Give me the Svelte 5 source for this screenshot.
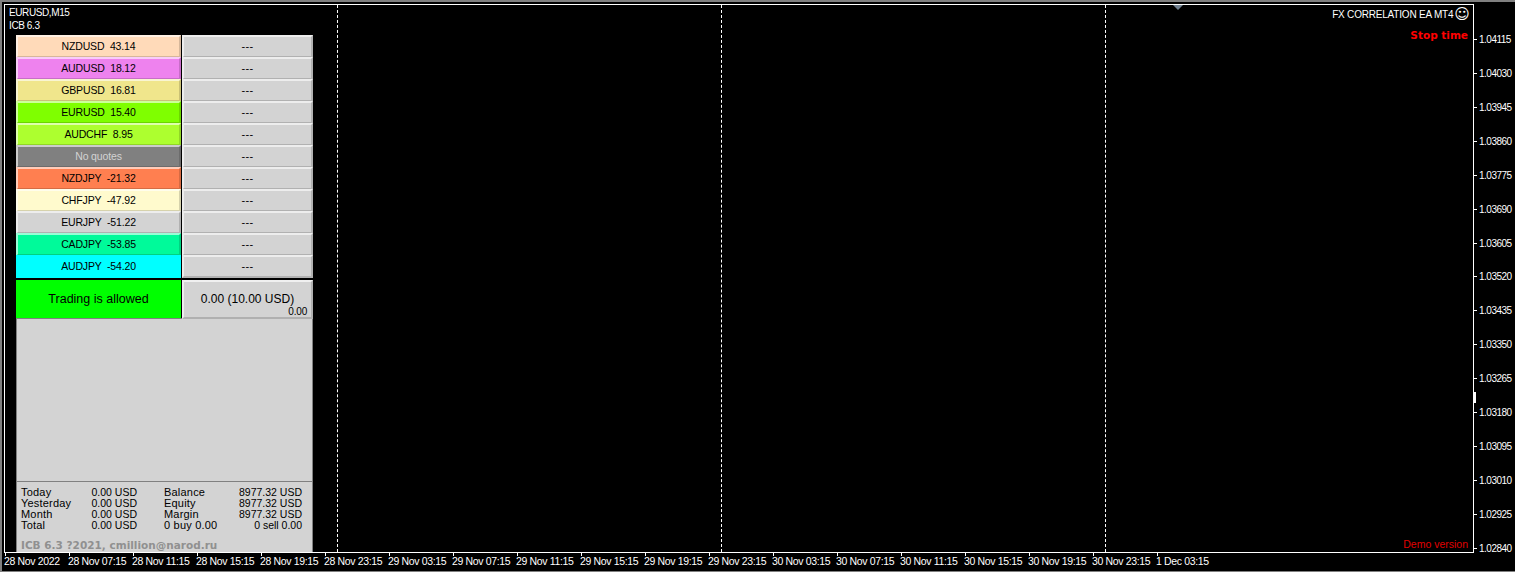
<script>
  const rows = [
    ['NZDUSD  43.14', '#ffdab9'], ['AUDUSD  18.12', '#ee82ee'], ['GBPUSD  16.81', '#f0e68c'],
    ['EURUSD  15.40', '#7fff00'], ['AUDCHF  8.95', '#adff2f'], ['No quotes', '#808080'],
    ['NZDJPY  -21.32', '#ff7f50'], ['CHFJPY  -47.92', '#fffacd'], ['EURJPY  -51.22', '#d3d3d3'],
    ['CADJPY  -53.85', '#00fa9a'], ['AUDJPY  -54.20', '#00ffff']
  ];
  const prices = Array.from({ length: 16 }, (_, i) => (1.04115 - i * 0.00085).toFixed(5));
  const times = ['28 Nov 2022','28 Nov 07:15','28 Nov 11:15','28 Nov 15:15','28 Nov 19:15','28 Nov 23:15',
    '29 Nov 03:15','29 Nov 07:15','29 Nov 11:15','29 Nov 15:15','29 Nov 19:15','29 Nov 23:15',
    '30 Nov 03:15','30 Nov 07:15','30 Nov 11:15','30 Nov 15:15','30 Nov 19:15','30 Nov 23:15','1 Dec 03:15'];
  const stats = [
    ['Today','0.00 USD','Balance','8977.32 USD'],
    ['Yesterday','0.00 USD','Equity','8977.32 USD'],
    ['Month','0.00 USD','Margin','8977.32 USD'],
    ['Total','0.00 USD','0 buy 0.00','0 sell 0.00']
  ];
</script>

<div class="window">
  <main class="chart">
    <i class="grid g1"></i><i class="grid g2"></i><i class="grid g3"></i>
    <i class="shift"></i>
    <i class="scale"></i>
    <div class="legend"><div>EURUSD,M15</div><div>ICB 6.3</div></div>
    <div class="brand">FX CORRELATION EA MT4<span class="smile">☺</span></div>
    <div class="stop">Stop time</div>
    <div class="demo">Demo version</div>

    <section class="panel">
      {#each rows as r}
        <div class="row">
          <div class="btn" class:muted={r[0] === 'No quotes'} class:flat={r[1] === '#00ffff'} style="--c:{r[1]}">{r[0]}</div>
          <div class="btn dash" style="--c:#d3d3d3">---</div>
        </div>
      {/each}
      <div class="status">
        <div class="allowed">Trading is allowed</div>
        <div class="profit">0.00 (10.00 USD)<small>0.00</small></div>
      </div>
      <div class="box">
        <div class="empty"></div>
        <div class="stats">
          {#each stats as s}
            <div class="line"><span class="lbl">{s[0]}</span><span class="v">{s[1]}</span><span class="lbl l2">{s[2]}</span><span class="v">{s[3]}</span></div>
          {/each}
        </div>
        <div class="copy">ICB 6.3 ?2021, cmillion@narod.ru</div>
      </div>
    </section>
  </main>
  <aside class="prices">
    {#each prices as p}<div class="price">{p}</div>{/each}
  </aside>
  <footer class="times">
    {#each times as t}<div class="time">{t}</div>{/each}
  </footer>
</div>

<style>
  :global(body) { margin: 0; background: #000; }
  .window {
    width: 1515px; height: 572px; box-sizing: border-box; background: #000; overflow: hidden;
    border-top: 2px solid #808080; border-left: 2px solid #808080; border-bottom: 1px solid #808080;
    padding: 2px 0 0 2px;
    display: grid; grid-template-columns: 1470px 41px; grid-template-rows: 549px 18px;
    font: 10px/11px "Liberation Sans", Arial, sans-serif; color: #fff;
  }
  .chart { position: relative; border: 1px solid #fff; background: #000; }
  .grid { position: absolute; top: 0; bottom: 0; width: 0; border-left: 1px dashed #fff; }
  .g1 { left: 332px; } .g2 { left: 716px; } .g3 { left: 1100px; }
  .shift {
    position: absolute; top: 0; left: 1168px; width: 0; height: 0;
    border: 5px solid transparent; border-top: 5px solid #708090; border-bottom: 0;
  }
  .scale { position: absolute; right: -3px; top: 387px; width: 3px; height: 11px; background: #fff; }
  .legend { position: absolute; left: 4px; top: 1px; line-height: 13px; font-size: 10px; letter-spacing: -0.4px; }
  .brand { position: absolute; right: 3px; top: 3px; display: flex; align-items: center; height: 13px; white-space: nowrap; letter-spacing: -0.2px; }
  .smile { font: 15px/13px "DejaVu Sans", sans-serif; margin-left: 1px; letter-spacing: 0; }
  .stop { position: absolute; right: 5px; top: 24px; color: #f00; font: bold 10.5px/13px "DejaVu Sans", sans-serif; }
  .demo { position: absolute; right: 5px; bottom: 1px; color: #e00000; font-size: 10.5px; line-height: 13px; }

  .panel { position: absolute; left: 11px; top: 30px; width: 297px; bottom: 0; display: flex; flex-direction: column; color: #000; font-size: 10.5px; }
  .row { flex: none; display: grid; grid-template-columns: 165px 132px; height: 22px; }
  .btn {
    box-sizing: border-box; background: var(--c); text-align: center; white-space: pre; line-height: 19px; letter-spacing: -0.15px;
    border: 2px solid;
    border-top-color: color-mix(in srgb, var(--c) 40%, white);
    border-left-color: color-mix(in srgb, var(--c) 40%, white);
    border-right-color: color-mix(in srgb, var(--c) 84%, black);
    border-bottom-color: color-mix(in srgb, var(--c) 84%, black);
  }
  .flat { border-color: var(--c); }
  .dash { margin-left: 1px; letter-spacing: 0.4px; font-size: 11px; }
  .muted { color: #d3d3d3; }
  .status { flex: none; margin-top: 3px; display: grid; grid-template-columns: 165px 132px; height: 38px; font-size: 12px; text-align: center; }
  .allowed { background: #0f0; line-height: 39px; font-size: 12.5px; }
  .profit {
    position: relative; margin-left: 1px; background: #d3d3d3; box-sizing: border-box;
    border: 2px solid; border-color: #f0f0f0 #b0b0b0 #b0b0b0 #f0f0f0;
    line-height: 35px;
  }
  .profit small { position: absolute; right: 4px; bottom: 0; font-size: 10px; line-height: 11px; letter-spacing: -0.2px; }
  .box { flex: 1; display: flex; flex-direction: column; background: #d3d3d3; border: 1px solid #808080; border-bottom: 0; }
  .empty { flex: none; height: 162px; border-bottom: 1px solid #808080; }
  .stats { flex: none; padding: 5px 10px 0 4px; }
  .line { display: grid; grid-template-columns: 60px 56px 97px 1fr; height: 11px; line-height: 11px; font-size: 10.5px; white-space: nowrap; }
  .lbl { font-size: 11px; letter-spacing: 0.2px; }
  .l2 { padding-left: 27px; }
  .v { text-align: right; }
  .copy { margin: 8px 0 0 4px; color: #909090; font: bold 10.5px/13px "DejaVu Sans", sans-serif; white-space: nowrap; }

  .prices { padding-top: 19px; }
  .price { position: relative; height: 33.93px; line-height: 34px; padding-left: 5px; box-sizing: border-box; font-size: 10px; letter-spacing: -0.5px; }
  .price::before { content: ""; position: absolute; left: 0; top: 16px; width: 3px; height: 1px; background: #fff; }

  .times { grid-column: 1 / -1; display: flex; }
  .time { position: relative; width: 64px; flex: none; padding-top: 2px; line-height: 13px; white-space: nowrap; font-size: 10.5px; letter-spacing: -0.35px; }
  .time::before { content: ""; position: absolute; left: 1px; top: 0; width: 1px; height: 3px; background: #fff; }
</style>
